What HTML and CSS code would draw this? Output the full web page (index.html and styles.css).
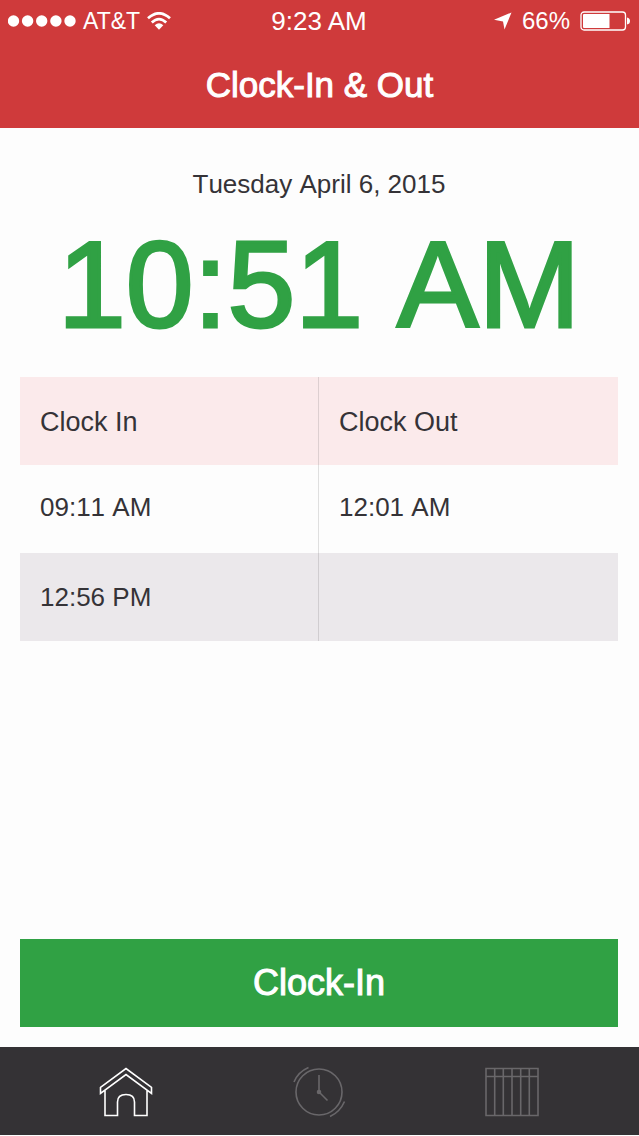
FILE: index.html
```html
<!DOCTYPE html>
<html lang="en">
<head>
<meta charset="utf-8">
<meta name="viewport" content="width=device-width, initial-scale=1">
<title>Clock-In &amp; Out</title>
<link rel="stylesheet" href="styles.css">
</head>
<body>
<div class="app">
  <header class="header">
    <div class="status">
      <div class="status-left">
        <svg class="signal" viewBox="0 0 68 12" width="68" height="12" aria-hidden="true"><g fill="#fff"><circle cx="5.500" cy="6" r="5.700"/><circle cx="19.600" cy="6" r="5.700"/><circle cx="33.700" cy="6" r="5.700"/><circle cx="47.900" cy="6" r="5.700"/><circle cx="62" cy="6" r="5.700"/></g></svg>
        <span class="carrier">AT&amp;T</span>
        <svg viewBox="0 0 24 18" width="24" height="18" aria-hidden="true"><path d="M1 6.300Q12-3.700 23 6.300M4.800 10.500Q12 3.700 19.200 10.500" fill="none" stroke="#fff" stroke-width="2.700"/><path d="M7.700 13.200Q12 9.400 16.300 13.200L12 17.800Z" fill="#fff"/></svg>
      </div>
      <span class="status-time">9:23 AM</span>
      <div class="status-right">
        <svg viewBox="0 0 18 18" width="18" height="18" aria-hidden="true"><path d="M17.500.5L10.500 17.500 9 9.500 0 7.700Z" fill="#fff"/></svg>
        <span class="percent">66%</span>
        <svg viewBox="0 0 50 20" width="50" height="20" aria-hidden="true"><rect x="1" y="1" width="44.500" height="18" rx="3" fill="none" stroke="#fff" stroke-width="1.300"/><path d="M4 3H29.500V17H4Q3 17 3 16V4Q3 3 4 3Z" fill="#fff"/><path d="M47 6.500Q50 7 50 10T47 13.500Z" fill="#fff"/></svg>
      </div>
    </div>
    <h1 class="title">Clock-In &amp; Out</h1>
  </header>
  <main class="main">
    <p class="date">Tuesday April 6, 2015</p>
    <p class="time">10:51 AM</p>
    <table class="log">
      <thead><tr><th scope="col">Clock In</th><th scope="col">Clock Out</th></tr></thead>
      <tbody>
        <tr><td>09:11 AM</td><td>12:01 AM</td></tr>
        <tr><td>12:56 PM</td><td></td></tr>
      </tbody>
    </table>
    <button class="action" type="button">Clock-In</button>
  </main>
  <nav class="tabs" aria-label="Main">
    <a class="tab tab-active" href="#home" aria-label="Home">
      <svg viewBox="0 0 54 50" width="54" height="50"><path d="M1.500 20.300L27 1.500 52.500 20.300V26.500L27 7.500 1.500 26.500ZM6 23.500V48.500H18.500V35Q18.500 27.500 27 27.500T35.500 35V48.500H48V23.500"/></svg>
    </a>
    <a class="tab" href="#history" aria-label="Time clock">
      <svg viewBox="0 0 54 52" width="54" height="52"><circle cx="27" cy="26" r="23"/><path d="M27 9V26L35.500 34.500M2 16Q6 6 16.500 1.500M38 50.500Q48 46 52.500 35.500"/><circle class="dot" cx="27" cy="26" r="1.500"/></svg>
    </a>
    <a class="tab" href="#calendar" aria-label="Schedule">
      <svg viewBox="0 0 54 50" width="54" height="50"><path d="M1 1.500H53V48.500H1ZM1 9.500H53M9.700 1.500V48.500M18.300 1.500V48.500M27 1.500V48.500M35.700 1.500V48.500M44.300 1.500V48.500"/></svg>
    </a>
  </nav>
</div>
</body>
</html>
```
FILE: styles.css
```css
* { box-sizing: border-box; }

body {
  margin: 0;
  background: #fdfdfd;
  color: #353337;
  font-family: "Liberation Sans", Arial, sans-serif;
}

.app {
  display: flex;
  flex-direction: column;
  min-height: 100vh;
  padding-bottom: 1px;
}

.header {
  height: 128px;
  background: #cf3a3b;
  color: #fff;
}

.status {
  display: grid;
  grid-template-columns: 1fr auto 1fr;
  align-items: center;
  height: 42px;
  padding: 0 9px 0 8px;
}

.status-left,
.status-right {
  display: flex;
  align-items: center;
  gap: 7px;
  font-size: 24px;
}

.status-right {
  justify-content: flex-end;
  gap: 10px;
}

.carrier { font-size: 23px; }

.status-time { font-size: 26px; }

.title {
  margin: 0;
  font-size: 35px;
  font-weight: 400;
  line-height: 86px;
  text-align: center;
  -webkit-text-stroke: 1px currentColor;
}

.main {
  display: flex;
  flex: 1;
  flex-direction: column;
  padding: 40px 21px 20px 20px;
}

.date {
  margin: 0;
  font-size: 26px;
  font-kerning: none;
  line-height: 32px;
  text-align: center;
}

.time {
  margin: 0;
  padding-bottom: 7px;
  color: #30a144;
  font-size: 122px;
  font-kerning: none;
  line-height: 170px;
  text-align: center;
  white-space: nowrap;
  -webkit-text-stroke: 3px currentColor;
}

.log {
  width: 100%;
  border-collapse: separate;
  border-spacing: 0;
  table-layout: fixed;
  font-size: 26px;
  font-kerning: none;
}

.log th,
.log td {
  height: 88px;
  padding: 0 20px;
  font-weight: 400;
  text-align: left;
}

.log th {
  padding-top: 2px;
  background: #fbeaeb;
  font-size: 27px;
}

.log tbody tr:first-child td { padding-bottom: 4px; }

.log tr > :first-child { border-right: 1px solid rgba(53, 51, 55, 0.15); }

.log tbody tr:nth-child(even) { background: #ebe8eb; }

.action {
  height: 88px;
  margin-top: auto;
  border: 0;
  background: #30a144;
  color: #fff;
  font: inherit;
  font-size: 36px;
  -webkit-text-stroke: 1px currentColor;
}

.tabs {
  display: grid;
  grid-template-columns: repeat(3, 1fr);
  height: 88px;
  padding: 2px 31px 0 29px;
  background: #343235;
}

.tab {
  display: flex;
  align-items: center;
  justify-content: center;
  color: #69676a;
}

.tab-active { color: #fff; }

.tab svg {
  fill: none;
  stroke: currentColor;
  stroke-width: 1.6;
}

.tab .dot { fill: currentColor; }
```
